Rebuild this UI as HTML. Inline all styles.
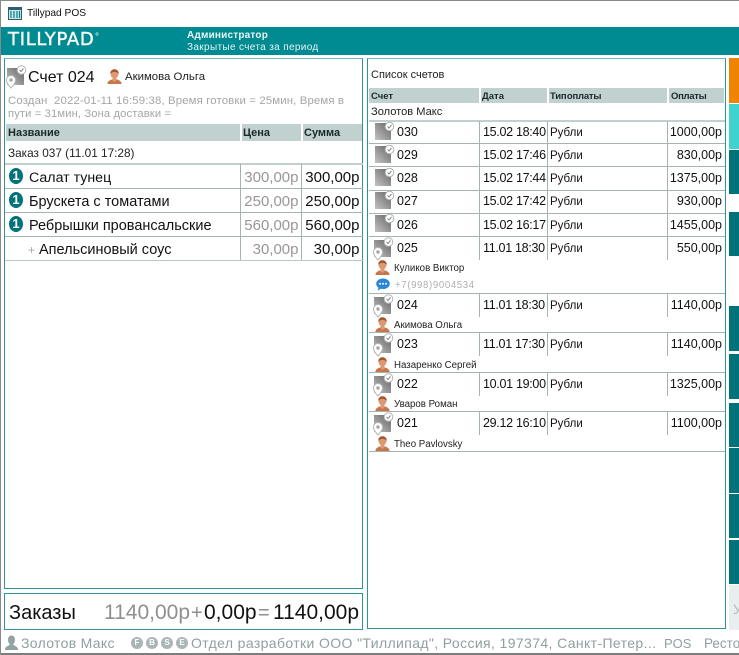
<!DOCTYPE html>
<html lang="ru"><head><meta charset="utf-8"><title>Tillypad POS</title>
<style>
html,body{margin:0;padding:0;background:#fff}
body{width:739px;height:655px;position:relative;overflow:hidden;font-family:"Liberation Sans","Noto Sans CJK SC",sans-serif;color:#111}
div,span.a,svg.a{position:absolute}
.t{position:absolute;white-space:nowrap}
.r{text-align:right}
.hd{background:#c1d1d0;height:15px}
.ht{position:absolute;white-space:nowrap;font-size:9.5px;font-weight:bold;line-height:15px;color:#1a2a2a}
.lh{background:#a4b4b2}
.bar{left:729px;width:10px;background:#00727a}
.n{font-size:12.5px;line-height:16px}
.d{font-size:12.5px;line-height:16px;letter-spacing:-.3px}
.s{font-size:11.5px;line-height:18px}
.c{font-size:9.7px;line-height:14px;color:#222}
.m{font-size:15px;line-height:20px}
.g{color:#979797}
.big{font-size:21px;line-height:24px}
</style></head><body>
<svg width="0" height="0" style="position:absolute"><defs>
<linearGradient id="gr" x1="0" y1="1" x2="1" y2="0"><stop offset="0" stop-color="#c4c4c4"/><stop offset="1" stop-color="#636363"/></linearGradient>
<symbol id="chk" viewBox="0 0 22 20"><rect x="0" y="1" width="16" height="17" fill="url(#gr)"/><circle cx="14.500" cy="4.500" r="4.300" fill="#fff" stroke="#b5b5b5"/><path d="M12.500 4.500l1.500 1.500 2.500-3" fill="none" stroke="#888" stroke-width="1"/></symbol>
<symbol id="pin" viewBox="0 0 24 24"><rect x="2" y="3" width="17" height="17" fill="url(#gr)"/><circle cx="16.500" cy="5" r="4.300" fill="#fff" stroke="#b5b5b5"/><path d="M14.500 5l1.500 1.500 2.500-3" fill="none" stroke="#888" stroke-width="1"/><path d="M6 10.500a4.600 4.600 0 0 1 4.600 4.600C10.600 18 6 23 6 23S1.400 18 1.400 15.100A4.600 4.600 0 0 1 6 10.500z" fill="#fff" stroke="#b5b5b5"/><circle cx="6" cy="15" r="1.700" fill="#a5a5a5"/></symbol>
<symbol id="per" viewBox="0 0 16 16"><path d="M.5 16c0-3.500 3.500-4.500 5.500-5.200V9.500C4.500 8.500 3.800 7 3.800 5 3.800 2 6 .5 8 .5s4.200 1.500 4.200 4.500c0 2-.7 3.500-2.200 4.500v1.300c2 .7 5.500 1.700 5.500 5.200z" fill="#dd9a72"/><path d="M4 5.500C4.500 3.500 6.500 3 8 3s3.500.5 4 2.500l.5-1.500C12 1 9.500.2 8 .2S4 1 3.500 4z" fill="#a4552c"/><path d="M.5 16c0-2.500 2-3.800 4.500-4.600L8 14l3-2.600c2.500.8 4.500 2.100 4.500 4.600z" fill="#c5764a"/></symbol>
</defs></svg>

<!-- title bar -->
<div style="left:0;top:0;width:739px;height:1px;background:#8a8a8a"></div>
<svg class="a" style="left:8px;top:7px" width="14" height="13" viewBox="0 0 14 13"><rect x=".5" y=".5" width="13" height="12" fill="#cfe6e6" stroke="#2b5f78"/><rect x="1" y="1" width="12" height="2" fill="#2b5f78"/><path d="M3 4v7M6 4v7M9 4v7M11.500 4v7" stroke="#00808a" stroke-width="1.200"/></svg>
<div class="t" style="left:27px;top:6px;font-size:10.200px;line-height:15px;color:#111">Tillypad POS</div>

<!-- header -->
<div style="left:1px;top:27px;width:738px;height:28px;background:#008b92"></div>
<div class="t" style="left:8px;top:29px;font-size:18px;line-height:22px;color:#fff;font-family:'DejaVu Sans',sans-serif;text-transform:uppercase;-webkit-text-stroke:.4px #fff;letter-spacing:.7px">Tillypad</div>
<div class="t" style="left:95px;top:33px;font-size:10px;line-height:10px;color:#fff">°</div>
<div class="t" style="left:187px;top:29px;font-size:10px;font-weight:bold;line-height:13px;color:#eaf5f5;letter-spacing:.2px">Администратор</div>
<div class="t" style="left:187px;top:41px;font-size:10px;line-height:13px;color:#e6f3f3;letter-spacing:.35px">Закрытые счета за период</div>

<!-- left panel -->
<div style="left:4px;top:58px;width:357px;height:529px;border:1.500px solid #2f9297;border-top-color:#76b9bc"></div>
<svg class="a" style="left:5px;top:65px" width="24" height="24"><use href="#pin" width="24" height="24"/></svg>
<div class="t" style="left:28px;top:68px;font-size:16px;line-height:20px;color:#111">Счет 024</div>
<svg class="a" style="left:107px;top:69px" width="15" height="15"><use href="#per" width="15" height="15"/></svg>
<div class="t" style="left:125px;top:70px;font-size:11.400px;line-height:15px;color:#222">Акимова Ольга</div>
<div class="t" style="left:8px;top:94px;font-size:11.400px;line-height:14px;color:#a5a5a5;letter-spacing:.13px;white-space:pre">Создан  2022-01-11 16:59:38, Время готовки = 25мин, Время в</div>
<div class="t" style="left:8px;top:107px;font-size:11.200px;line-height:14px;color:#a5a5a5;letter-spacing:.13px">пути = 31мин, Зона доставки =</div>

<div class="hd" style="left:6px;top:124px;width:234px;height:17px"></div>
<div class="hd" style="left:242px;top:124px;width:59px;height:17px"></div>
<div class="hd" style="left:303px;top:124px;width:59px;height:17px"></div>
<div class="ht" style="left:8px;top:125px;font-size:11px;line-height:17px">Название</div>
<div class="ht" style="left:243px;top:125px;font-size:11px;line-height:17px">Цена</div>
<div class="ht" style="left:304px;top:125px;font-size:11px;line-height:17px">Сумма</div>
<div class="t" style="left:8px;top:146px;font-size:11.800px;line-height:15px;color:#222">Заказ 037 (11.01 17:28)</div>

<div class="lh" style="left:5px;top:163px;width:358px;height:1.500px;background:#c1cfce"></div>
<div class="lh" style="left:5px;top:188px;width:358px;height:1px"></div>
<div class="lh" style="left:5px;top:212px;width:358px;height:1px"></div>
<div class="lh" style="left:5px;top:236px;width:358px;height:1px"></div>
<div class="lh" style="left:5px;top:260px;width:358px;height:1px;background:#bac8c7"></div>
<div class="lh" style="left:240px;top:164px;width:1px;height:96px"></div>
<div class="lh" style="left:301px;top:164px;width:1px;height:96px"></div>

<div style="left:9px;top:168px;width:14px;height:16px;border-radius:7px/8px;background:#00727a"></div>
<div style="left:9px;top:192px;width:14px;height:16px;border-radius:7px/8px;background:#00727a"></div>
<div style="left:9px;top:216px;width:14px;height:16px;border-radius:7px/8px;background:#00727a"></div>
<div class="t" style="left:9px;top:168px;width:14px;text-align:center;color:#fff;font-size:13px;line-height:16px;font-weight:bold">1</div>
<div class="t" style="left:9px;top:192px;width:14px;text-align:center;color:#fff;font-size:13px;line-height:16px;font-weight:bold">1</div>
<div class="t" style="left:9px;top:216px;width:14px;text-align:center;color:#fff;font-size:13px;line-height:16px;font-weight:bold">1</div>

<div class="t m" style="left:29px;top:168px;font-size:14.200px">Салат тунец</div>
<div class="t m" style="left:29px;top:192px;font-size:14.500px">Брускета с томатами</div>
<div class="t m" style="left:29px;top:216px;font-size:14.500px">Ребрышки провансальские</div>
<div class="t m" style="left:28px;top:240px;font-size:12px;color:#aaa">+</div>
<div class="t m" style="left:39px;top:240px;font-size:14.500px">Апельсиновый соус</div>

<div class="t m r g" style="left:230px;width:68.500px;top:168px">300,00р</div>
<div class="t m r g" style="left:230px;width:68.500px;top:192px">250,00р</div>
<div class="t m r g" style="left:230px;width:68.500px;top:216px">560,00р</div>
<div class="t m r g" style="left:230px;width:68.500px;top:240px">30,00р</div>
<div class="t m r" style="left:290px;width:69.500px;top:168px">300,00р</div>
<div class="t m r" style="left:290px;width:69.500px;top:192px">250,00р</div>
<div class="t m r" style="left:290px;width:69.500px;top:216px">560,00р</div>
<div class="t m r" style="left:290px;width:69.500px;top:240px">30,00р</div>

<!-- totals -->
<div style="left:4px;top:593px;width:357px;height:35px;border:1.500px solid #2f9297"></div>
<div class="t" style="left:9px;top:601px;font-size:20px;line-height:24px;color:#111">Заказы</div>
<div class="t r big" style="left:90px;width:100px;top:601px;color:#8f8f8f">1140,00р</div>
<div class="t big" style="left:191px;top:601px;font-size:20px;color:#8f8f8f">+</div>
<div class="t big" style="left:204px;top:601px">0,00р</div>
<div class="t big" style="left:258px;top:601px;font-size:20px;color:#8f8f8f">=</div>
<div class="t r big" style="left:259px;width:100px;top:601px">1140,00р</div>

<!-- right panel -->
<div style="left:367px;top:58px;width:356.500px;height:569px;border:1.500px solid #2f9297;border-top-color:#76b9bc"></div>
<div class="t" style="left:371px;top:68px;font-size:11px;line-height:15px;color:#222">Список счетов</div>
<div class="hd" style="left:369px;top:88px;width:110px"></div>
<div class="hd" style="left:481px;top:88px;width:66px"></div>
<div class="hd" style="left:549px;top:88px;width:118px"></div>
<div class="hd" style="left:669px;top:88px;width:55px"></div>
<div class="ht" style="left:371px;top:89px">Счет</div>
<div class="ht" style="left:482px;top:89px">Дата</div>
<div class="ht" style="left:550px;top:89px;letter-spacing:-.2px;word-spacing:-2px">Тип оплаты</div>
<div class="ht" style="left:671px;top:89px;letter-spacing:-.3px">Оплаты</div>
<div class="t" style="left:371px;top:105px;font-size:11.100px;line-height:15px;color:#222">Золотов Макс</div>

<div class="lh" style="left:369px;top:120px;width:356px;height:1.500px;background:#c1cfce"></div>
<div class="lh" style="left:369px;top:143px;width:356px;height:1px"></div>
<div class="lh" style="left:369px;top:166px;width:356px;height:1px"></div>
<div class="lh" style="left:369px;top:190px;width:356px;height:1px"></div>
<div class="lh" style="left:369px;top:213px;width:356px;height:1px"></div>
<div class="lh" style="left:369px;top:236px;width:356px;height:1px"></div>
<div class="lh" style="left:369px;top:293px;width:356px;height:1px"></div>
<div class="lh" style="left:369px;top:332px;width:356px;height:1px"></div>
<div class="lh" style="left:369px;top:372px;width:356px;height:1px"></div>
<div class="lh" style="left:369px;top:411px;width:356px;height:1px"></div>
<div class="lh" style="left:369px;top:451px;width:356px;height:1px"></div>

<div class="lh" style="left:479px;top:121px;width:1px;height:139px"></div>
<div class="lh" style="left:547px;top:121px;width:1px;height:139px"></div>
<div class="lh" style="left:667px;top:121px;width:1px;height:139px"></div>
<div class="lh" style="left:479px;top:294px;width:1px;height:23px"></div>
<div class="lh" style="left:547px;top:294px;width:1px;height:23px"></div>
<div class="lh" style="left:667px;top:294px;width:1px;height:23px"></div>
<div class="lh" style="left:479px;top:333px;width:1px;height:23px"></div>
<div class="lh" style="left:547px;top:333px;width:1px;height:23px"></div>
<div class="lh" style="left:667px;top:333px;width:1px;height:23px"></div>
<div class="lh" style="left:479px;top:373px;width:1px;height:23px"></div>
<div class="lh" style="left:547px;top:373px;width:1px;height:23px"></div>
<div class="lh" style="left:667px;top:373px;width:1px;height:23px"></div>
<div class="lh" style="left:479px;top:412px;width:1px;height:23px"></div>
<div class="lh" style="left:547px;top:412px;width:1px;height:23px"></div>
<div class="lh" style="left:667px;top:412px;width:1px;height:23px"></div>

<svg class="a" style="left:375px;top:122px" width="22" height="20"><use href="#chk" width="22" height="20"/></svg>
<svg class="a" style="left:375px;top:145px" width="22" height="20"><use href="#chk" width="22" height="20"/></svg>
<svg class="a" style="left:375px;top:168px" width="22" height="20"><use href="#chk" width="22" height="20"/></svg>
<svg class="a" style="left:375px;top:191px" width="22" height="20"><use href="#chk" width="22" height="20"/></svg>
<svg class="a" style="left:375px;top:214px" width="22" height="20"><use href="#chk" width="22" height="20"/></svg>
<svg class="a" style="left:372px;top:237px" width="24" height="24"><use href="#pin" width="24" height="24"/></svg>
<svg class="a" style="left:372px;top:294px" width="24" height="24"><use href="#pin" width="24" height="24"/></svg>
<svg class="a" style="left:372px;top:333px" width="24" height="24"><use href="#pin" width="24" height="24"/></svg>
<svg class="a" style="left:372px;top:373px" width="24" height="24"><use href="#pin" width="24" height="24"/></svg>
<svg class="a" style="left:372px;top:412px" width="24" height="24"><use href="#pin" width="24" height="24"/></svg>

<div class="t n" style="left:397px;top:124px">030</div><div class="t d" style="left:483px;top:124px">15.02 18:40</div><div class="t s" style="left:550px;top:124px">Рубли</div><div class="t n r" style="left:639px;width:83px;top:124px">1000,00р</div>
<div class="t n" style="left:397px;top:147px">029</div><div class="t d" style="left:483px;top:147px">15.02 17:46</div><div class="t s" style="left:550px;top:147px">Рубли</div><div class="t n r" style="left:639px;width:83px;top:147px">830,00р</div>
<div class="t n" style="left:397px;top:170px">028</div><div class="t d" style="left:483px;top:170px">15.02 17:44</div><div class="t s" style="left:550px;top:170px">Рубли</div><div class="t n r" style="left:639px;width:83px;top:170px">1375,00р</div>
<div class="t n" style="left:397px;top:193px">027</div><div class="t d" style="left:483px;top:193px">15.02 17:42</div><div class="t s" style="left:550px;top:193px">Рубли</div><div class="t n r" style="left:639px;width:83px;top:193px">930,00р</div>
<div class="t n" style="left:397px;top:217px">026</div><div class="t d" style="left:483px;top:217px">15.02 16:17</div><div class="t s" style="left:550px;top:217px">Рубли</div><div class="t n r" style="left:639px;width:83px;top:217px">1455,00р</div>
<div class="t n" style="left:397px;top:240px">025</div><div class="t d" style="left:483px;top:240px">11.01 18:30</div><div class="t s" style="left:550px;top:240px">Рубли</div><div class="t n r" style="left:639px;width:83px;top:240px">550,00р</div>
<div class="t n" style="left:397px;top:297px">024</div><div class="t d" style="left:483px;top:297px">11.01 18:30</div><div class="t s" style="left:550px;top:297px">Рубли</div><div class="t n r" style="left:639px;width:83px;top:297px">1140,00р</div>
<div class="t n" style="left:397px;top:336px">023</div><div class="t d" style="left:483px;top:336px">11.01 17:30</div><div class="t s" style="left:550px;top:336px">Рубли</div><div class="t n r" style="left:639px;width:83px;top:336px">1140,00р</div>
<div class="t n" style="left:397px;top:376px">022</div><div class="t d" style="left:483px;top:376px">10.01 19:00</div><div class="t s" style="left:550px;top:376px">Рубли</div><div class="t n r" style="left:639px;width:83px;top:376px">1325,00р</div>
<div class="t n" style="left:397px;top:415px">021</div><div class="t d" style="left:483px;top:415px">29.12 16:10</div><div class="t s" style="left:550px;top:415px">Рубли</div><div class="t n r" style="left:639px;width:83px;top:415px">1100,00р</div>

<svg class="a" style="left:375px;top:260px" width="15" height="15"><use href="#per" width="15" height="15"/></svg>
<div class="t c" style="left:394px;top:262px">Куликов Виктор</div>
<svg class="a" style="left:376px;top:278px" width="14" height="13" viewBox="0 0 14 13"><path d="M7 .5c3.800 0 6.800 2.300 6.800 5.200S10.800 11 7 11c-.8 0-1.500-.1-2.200-.3L1.500 12.600l1-2.900C1 8.700.2 7.300.2 5.700.2 2.800 3.200.5 7 .5z" fill="#2a86d8"/><circle cx="4" cy="5.700" r="1" fill="#fff"/><circle cx="7" cy="5.700" r="1" fill="#fff"/><circle cx="10" cy="5.700" r="1" fill="#fff"/></svg>
<div class="t c" style="left:395px;top:279px;color:#b0b0b0;letter-spacing:.6px">+7(998)9004534</div>
<svg class="a" style="left:375px;top:317px" width="15" height="15"><use href="#per" width="15" height="15"/></svg>
<div class="t c" style="left:394px;top:319px">Акимова Ольга</div>
<svg class="a" style="left:375px;top:357px" width="15" height="15"><use href="#per" width="15" height="15"/></svg>
<div class="t c" style="left:394px;top:359px">Назаренко Сергей</div>
<svg class="a" style="left:375px;top:396px" width="15" height="15"><use href="#per" width="15" height="15"/></svg>
<div class="t c" style="left:394px;top:398px">Уваров Роман</div>
<svg class="a" style="left:375px;top:436px" width="15" height="15"><use href="#per" width="15" height="15"/></svg>
<div class="t c" style="left:394px;top:438px">Theo Pavlovsky</div>

<!-- right bars -->
<div class="bar" style="top:58px;height:45px;background:#f08300"></div>
<div class="bar" style="top:104px;height:45px;background:#3fd3cf"></div>
<div class="bar" style="top:150px;height:44px"></div>
<div class="bar" style="top:212px;height:44px"></div>
<div class="bar" style="top:306px;height:45px"></div>
<div class="bar" style="top:354px;height:45px"></div>
<div class="bar" style="top:403px;height:44px"></div>
<div class="bar" style="top:448px;height:45px"></div>
<div class="bar" style="top:494px;height:44px"></div>
<div class="bar" style="top:540px;height:44px"></div>
<div class="bar" style="top:585px;height:45px;background:#e9efef"></div>
<div class="t" style="left:733px;top:600px;font-size:14px;line-height:18px;color:#b4bcbc">У</div>

<!-- status bar -->
<svg class="a" style="left:4px;top:635px" width="15" height="15" viewBox="0 0 16 16"><path d="M1 16c0-3.500 3-4.500 5-5.200V9.500C4.800 8.500 4.300 7 4.300 5 4.300 2 6 .5 8 .5s3.700 1.500 3.700 4.500c0 2-.5 3.500-1.700 4.500v1.300c2 .7 5 1.700 5 5.200z" fill="#93a3a1"/></svg>
<div class="t" style="left:21px;top:635px;font-size:14px;line-height:17px;color:#8fa09e;letter-spacing:.32px">Золотов Макс</div>
<div style="left:131px;top:637px;width:12px;height:12px;border-radius:6px;background:#a9b6b5"></div>
<div style="left:146px;top:637px;width:12px;height:12px;border-radius:6px;background:#a9b6b5"></div>
<div style="left:161px;top:637px;width:12px;height:12px;border-radius:6px;background:#a9b6b5"></div>
<div style="left:176px;top:637px;width:12px;height:12px;border-radius:6px;background:#a9b6b5"></div>
<div class="t" style="left:131px;top:637px;width:12px;text-align:center;font-size:8px;line-height:12px;font-weight:bold;color:#fff">F</div>
<div class="t" style="left:146px;top:637px;width:12px;text-align:center;font-size:8px;line-height:12px;font-weight:bold;color:#fff">B</div>
<div class="t" style="left:161px;top:637px;width:12px;text-align:center;font-size:8px;line-height:12px;font-weight:bold;color:#fff">S</div>
<div class="t" style="left:176px;top:637px;width:12px;text-align:center;font-size:8px;line-height:12px;font-weight:bold;color:#fff">E</div>
<div class="t" style="left:191px;top:635px;font-size:14px;line-height:17px;color:#8fa09e;letter-spacing:.38px">Отдел разработки ООО "Тиллипад", Россия, 197374, Санкт-Петер...</div>
<div class="t" style="left:664px;top:635px;font-size:13px;line-height:17px;color:#8fa09e">POS</div>
<div class="t" style="left:704px;top:635px;font-size:13.500px;line-height:17px;color:#8fa09e">Ресторан</div>
<div style="left:0;top:653px;width:739px;height:2px;background:#7d7d7d"></div>
<div style="left:0;top:0;width:1px;height:655px;background:#8a8a8a"></div>
</body></html>
